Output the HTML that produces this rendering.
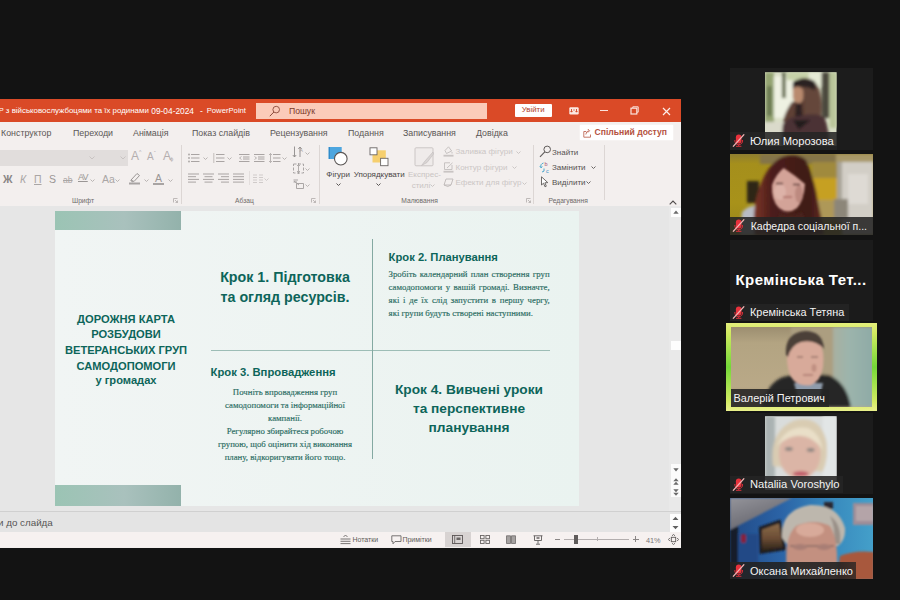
<!DOCTYPE html>
<html lang="uk">
<head>
<meta charset="utf-8">
<title>PowerPoint</title>
<style>
*{box-sizing:border-box;margin:0;padding:0}
html,body{width:900px;height:600px;overflow:hidden;background:#131313;font-family:"Liberation Sans",sans-serif}
.abs{position:absolute}
#ppt{position:absolute;left:0;top:99px;width:681px;height:448.5px;background:#f3efee;overflow:hidden}
#title{position:absolute;left:0;top:0;width:681px;height:23.3px;background:#da4a27;color:#fff;font-size:8.6px}
#title .t{position:absolute;top:6.6px;white-space:nowrap}
#search{position:absolute;left:256px;top:4px;width:231px;height:16px;background:#fbcbb9;color:#7a3a2a;font-size:8.6px}
#search span{position:absolute;left:33px;top:3px}
#login{position:absolute;left:514.7px;top:5px;width:37px;height:12.5px;background:#fff;color:#b03a1e;font-size:7.8px;text-align:center;line-height:12.5px;border-radius:1px}
#tabs{position:absolute;left:0;top:23px;width:681px;height:21px;font-size:8.85px;color:#5b5756}
#tabs span{position:absolute;top:5.7px;white-space:nowrap}
#share{position:absolute;left:580px;top:26px;width:92.5px;height:15px;background:#fff;color:#b4513e;font-weight:bold;font-size:8.6px;line-height:15px;white-space:nowrap;box-shadow:0 0 1.5px #fff}
#ribbon{position:absolute;left:0;top:44px;width:681px;height:63px;font-size:8px;color:#444}
.vsep{position:absolute;top:2px;width:1px;height:59px;background:#dcd6d4}
.glabel{position:absolute;top:53.5px;font-size:6.7px;color:#6e6a69;white-space:nowrap}
.rt{position:absolute;white-space:nowrap}
#work{position:absolute;left:0;top:107px;width:669px;height:305px;background:#e6e6e6}
#vscroll{position:absolute;left:669px;top:107px;width:12px;height:305px;background:#e9e9e9}
#slide{position:absolute;left:55px;top:112px;width:524px;height:295px;background:linear-gradient(90deg,#f1f5f4,#eaf3f0);overflow:hidden;color:#0f6b5f}
.deco{position:absolute;left:0;width:126px;height:19px;background:linear-gradient(90deg,#9bc4b4,#a9c1bd 55%,#93b2ab)}
.h{position:absolute;font-weight:bold;text-align:center;white-space:nowrap;color:#0d655a}
.b{position:absolute;font-family:"Liberation Serif",serif;font-size:8.78px;color:#2a6c62;white-space:nowrap;-webkit-text-stroke:0.15px #2a6c62}
.j{text-align:justify;text-align-last:justify;white-space:normal}
#notes{position:absolute;left:0;top:412px;width:681px;height:21px;background:#e4e4e4;border-top:1px solid #d0d0d0;font-size:9.8px;color:#555}
#status{position:absolute;left:0;top:433px;width:681px;height:15px;background:#f6f1f0;font-size:7px;color:#5f5b5a}
.tile{position:absolute;left:729.5px;width:143.5px;height:82px;background:#1c1c1c;overflow:hidden}
.nm{position:absolute;left:0;bottom:0;height:18px;background:rgba(36,36,36,.88);color:#f4f4f4;font-size:11px;line-height:18px;padding-left:20.5px;white-space:nowrap;overflow:hidden}
.mic{position:absolute;left:2.5px;top:1.9px;width:13px;height:13px}
</style>
</head>
<body>
<div id="ppt">
  <div id="title">
    <span class="t" style="right:532.2px;font-size:7.9px" id="t1">P з військовослужбоцями та їх родинами</span>
    <span class="t" style="left:151.3px;font-size:8.35px" id="t2">09-04-2024</span>
    <span class="t" style="left:200px" id="t3">-</span>
    <span class="t" style="left:206.7px;font-size:7.7px" id="t4">PowerPoint</span>
    <div id="search"><svg class="abs" style="left:13px;top:2px" width="12" height="12" viewBox="0 0 12 12"><circle cx="7.2" cy="4.6" r="3.3" fill="none" stroke="#8a4a3a" stroke-width="0.9"/><path d="M4.9 7 L0.8 11.2" stroke="#8a4a3a" stroke-width="1"/></svg><span>Пошук</span></div>
    <div id="login">Увійти</div>
    <svg class="abs" style="left:568.5px;top:7.5px" width="10" height="8" viewBox="0 0 10 8"><rect x="0.3" y="0.3" width="9.4" height="7.2" rx="1.2" fill="#fbe9e3"/><path d="M2.5 2 V5 M1.5 4 L2.5 5.2 L3.5 4 M7.5 2 V5 M6.5 4 L7.5 5.2 L8.5 4 M4.3 3 H5.7" fill="none" stroke="#d24625" stroke-width="0.9"/></svg>
    <div class="abs" style="left:600px;top:10.8px;width:7.5px;height:1px;background:#fbe3dc"></div>
    <svg class="abs" style="left:630px;top:7.3px" width="9" height="9" viewBox="0 0 9 9"><rect x="1" y="2.2" width="5.8" height="5.8" fill="none" stroke="#fbe3dc" stroke-width="1.2"/><path d="M2.8 2 V0.8 H8.2 V6.2 H7" fill="none" stroke="#fbe3dc" stroke-width="1"/></svg>
    <svg class="abs" style="left:661.5px;top:7.5px" width="9" height="9" viewBox="0 0 9 9"><path d="M1 1 L8 8 M8 1 L1 8" stroke="#fdeee9" stroke-width="1.2"/></svg>
  </div>
  <div id="tabs">
    <span style="left:1px">Конструктор</span>
    <span style="left:73px">Переходи</span>
    <span style="left:133px">Анімація</span>
    <span style="left:192px">Показ слайдів</span>
    <span style="left:270px">Рецензування</span>
    <span style="left:348px">Подання</span>
    <span style="left:403px">Записування</span>
    <span style="left:476px">Довідка</span>
  </div>
  <div id="share"><svg class="abs" style="left:3.3px;top:2.5px" width="9" height="10" viewBox="0 0 9 10"><path d="M3 3.5 H0.8 V9.2 H7.5 V6.5 M2.8 6.5 Q3.2 2.8 6 2.8 M4.8 1 L6.6 2.8 L4.8 4.6" fill="none" stroke="#c06a58" stroke-width="0.9"/></svg><span style="position:absolute;left:14.5px;top:0">Спільний доступ</span></div>
  <div id="ribbon">
    <!-- Font group -->
    <div class="abs" style="left:0;top:7px;width:128px;height:16px;background:#e1dddc"></div>
    <svg class="abs" style="left:89px;top:13px" width="6" height="4" viewBox="0 0 6 4"><path d="M0.5 0.5 L3 3 L5.5 0.5" fill="none" stroke="#c8c3c2" stroke-width="1"/></svg>
    <svg class="abs" style="left:120px;top:13px" width="6" height="4" viewBox="0 0 6 4"><path d="M0.5 0.5 L3 3 L5.5 0.5" fill="none" stroke="#c8c3c2" stroke-width="1"/></svg>
    <span class="rt" style="left:131px;top:6px;font-size:12px;color:#b3aeae">A</span><span class="rt" style="left:139px;top:6px;font-size:5px;color:#b3aeae">^</span>
    <span class="rt" style="left:147px;top:8px;font-size:10px;color:#b3aeae">A</span><span class="rt" style="left:154px;top:7px;font-size:5px;color:#b3aeae">ˇ</span>
    <span class="rt" style="left:163px;top:6px;font-size:12px;color:#b3aeae">A</span><span class="rt" style="left:170px;top:13px;font-size:6px;color:#b3aeae">ɸ</span>
    <span class="rt" style="left:3px;top:30px;font-size:10.5px;font-weight:bold;color:#8a8685">Ж</span>
    <span class="rt" style="left:20px;top:30px;font-size:10.5px;font-style:italic;color:#aaa6a5">К</span>
    <span class="rt" style="left:34px;top:30px;font-size:10.5px;text-decoration:underline;color:#aaa6a5">П</span>
    <span class="rt" style="left:49px;top:30px;font-size:10.5px;color:#9a9695">S</span>
    <span class="rt" style="left:63px;top:32px;font-size:8.5px;text-decoration:line-through;color:#aaa6a5">ab</span>
    <span class="rt" style="left:78px;top:29px;font-size:9px;text-decoration:underline;color:#9a9695;letter-spacing:-0.8px">AV</span>
    <svg class="abs" style="left:90px;top:36px" width="5" height="3" viewBox="0 0 5 3"><path d="M0.5 0.5 L2.5 2.5 L4.5 0.5" fill="none" stroke="#b9b4b3" stroke-width="1"/></svg>
    <span class="rt" style="left:102px;top:30px;font-size:10.5px;color:#aaa6a5">Aa</span>
    <svg class="abs" style="left:115px;top:36px" width="5" height="3" viewBox="0 0 5 3"><path d="M0.5 0.5 L2.5 2.5 L4.5 0.5" fill="none" stroke="#b9b4b3" stroke-width="1"/></svg>
    <svg class="abs" style="left:128px;top:28px" width="14" height="14" viewBox="0 0 14 14"><path d="M3 9 L9 2.5 L11.5 4.5 L6 10.5 Z M2.5 9.5 L5 11" fill="none" stroke="#9a9695" stroke-width="1"/><rect x="1" y="11.5" width="11" height="2" fill="#a8a4a3"/></svg>
    <svg class="abs" style="left:144px;top:36px" width="5" height="3" viewBox="0 0 5 3"><path d="M0.5 0.5 L2.5 2.5 L4.5 0.5" fill="none" stroke="#b9b4b3" stroke-width="1"/></svg>
    <span class="rt" style="left:155px;top:29px;font-size:10.5px;color:#9a9695">A</span>
    <div class="abs" style="left:153px;top:40px;width:11px;height:2px;background:#a8a4a3"></div>
    <svg class="abs" style="left:168px;top:36px" width="5" height="3" viewBox="0 0 5 3"><path d="M0.5 0.5 L2.5 2.5 L4.5 0.5" fill="none" stroke="#b9b4b3" stroke-width="1"/></svg>
    <span class="glabel" style="left:72px">Шрифт</span>
    <svg class="abs" style="left:173px;top:55px" width="5" height="5" viewBox="0 0 5 5"><path d="M0.5 4.5 V0.5 H4.5 M2 2 L4.5 4.5 M4.5 2.5 V4.5 H2.5" fill="none" stroke="#b0abaa" stroke-width="0.8"/></svg>
    <div class="vsep" style="left:181px"></div>

    <!-- Paragraph group -->
<svg class="abs" style="left:187.5px;top:9.5px" width="12" height="10" viewBox="0 0 12 10"><line x1="3" y1="1.5" x2="11.5" y2="1.5" stroke="#a9a4a3" stroke-width="1"/><line x1="3" y1="5" x2="11.5" y2="5" stroke="#a9a4a3" stroke-width="1"/><line x1="3" y1="8.5" x2="11.5" y2="8.5" stroke="#a9a4a3" stroke-width="1"/><circle cx="1" cy="1.5" r="0.9" fill="#a9a4a3"/><circle cx="1" cy="5" r="0.9" fill="#a9a4a3"/><circle cx="1" cy="8.5" r="0.9" fill="#a9a4a3"/></svg>
<svg class="abs" style="left:202.5px;top:14.0px" width="5" height="3" viewBox="0 0 5 3"><path d="M0.5 0.5 L2.5 2.5 L4.5 0.5" fill="none" stroke="#b9b4b3" stroke-width="1"/></svg>
<svg class="abs" style="left:213px;top:9.5px" width="12" height="10" viewBox="0 0 12 10"><line x1="3" y1="1.5" x2="11.5" y2="1.5" stroke="#a9a4a3" stroke-width="1"/><line x1="3" y1="5" x2="11.5" y2="5" stroke="#a9a4a3" stroke-width="1"/><line x1="3" y1="8.5" x2="11.5" y2="8.5" stroke="#a9a4a3" stroke-width="1"/><line x1="0.8" y1="0" x2="0.8" y2="10" stroke="#b5b0af" stroke-width="0.8"/></svg>
<svg class="abs" style="left:227.2px;top:14.0px" width="5" height="3" viewBox="0 0 5 3"><path d="M0.5 0.5 L2.5 2.5 L4.5 0.5" fill="none" stroke="#b9b4b3" stroke-width="1"/></svg>
<svg class="abs" style="left:239px;top:9.5px" width="11" height="10" viewBox="0 0 11 10"><line x1="0" y1="1.5" x2="10.5" y2="1.5" stroke="#a9a4a3" stroke-width="1"/><line x1="4" y1="4" x2="10.5" y2="4" stroke="#a9a4a3" stroke-width="1"/><line x1="4" y1="6" x2="10.5" y2="6" stroke="#a9a4a3" stroke-width="1"/><line x1="0" y1="8.5" x2="10.5" y2="8.5" stroke="#a9a4a3" stroke-width="1"/><path d="M2.5 3.5 L0.5 5 L2.5 6.5" fill="none" stroke="#a9a4a3" stroke-width="0.8"/></svg>
<svg class="abs" style="left:254px;top:9.5px" width="11" height="10" viewBox="0 0 11 10"><line x1="0" y1="1.5" x2="10.5" y2="1.5" stroke="#a9a4a3" stroke-width="1"/><line x1="4" y1="4" x2="10.5" y2="4" stroke="#a9a4a3" stroke-width="1"/><line x1="4" y1="6" x2="10.5" y2="6" stroke="#a9a4a3" stroke-width="1"/><line x1="0" y1="8.5" x2="10.5" y2="8.5" stroke="#a9a4a3" stroke-width="1"/><path d="M0.5 3.5 L2.5 5 L0.5 6.5" fill="none" stroke="#a9a4a3" stroke-width="0.8"/></svg>
<svg class="abs" style="left:269px;top:9.5px" width="12" height="10" viewBox="0 0 12 10"><line x1="4" y1="1.5" x2="11.5" y2="1.5" stroke="#a9a4a3" stroke-width="1"/><line x1="4" y1="5" x2="11.5" y2="5" stroke="#a9a4a3" stroke-width="1"/><line x1="4" y1="8.5" x2="11.5" y2="8.5" stroke="#a9a4a3" stroke-width="1"/><path d="M1.5 0.5 V9.5 M0 2 L1.5 0.5 L3 2 M0 8 L1.5 9.5 L3 8" fill="none" stroke="#a9a4a3" stroke-width="0.8"/></svg>
<svg class="abs" style="left:281.5px;top:14.0px" width="5" height="3" viewBox="0 0 5 3"><path d="M0.5 0.5 L2.5 2.5 L4.5 0.5" fill="none" stroke="#b9b4b3" stroke-width="1"/></svg>
<svg class="abs" style="left:187.5px;top:30px" width="12" height="10" viewBox="0 0 12 10"><line x1="0" y1="1" x2="11" y2="1" stroke="#a9a4a3" stroke-width="1"/><line x1="0" y1="3.7" x2="8" y2="3.7" stroke="#a9a4a3" stroke-width="1"/><line x1="0" y1="6.4" x2="11" y2="6.4" stroke="#a9a4a3" stroke-width="1"/><line x1="0" y1="9.1" x2="8" y2="9.1" stroke="#a9a4a3" stroke-width="1"/></svg>
<svg class="abs" style="left:203px;top:30px" width="12" height="10" viewBox="0 0 12 10"><line x1="0" y1="1" x2="11" y2="1" stroke="#a9a4a3" stroke-width="1"/><line x1="1.5" y1="3.7" x2="9.5" y2="3.7" stroke="#a9a4a3" stroke-width="1"/><line x1="0" y1="6.4" x2="11" y2="6.4" stroke="#a9a4a3" stroke-width="1"/><line x1="1.5" y1="9.1" x2="9.5" y2="9.1" stroke="#a9a4a3" stroke-width="1"/></svg>
<svg class="abs" style="left:218px;top:30px" width="12" height="10" viewBox="0 0 12 10"><line x1="0" y1="1" x2="11" y2="1" stroke="#a9a4a3" stroke-width="1"/><line x1="3" y1="3.7" x2="11" y2="3.7" stroke="#a9a4a3" stroke-width="1"/><line x1="0" y1="6.4" x2="11" y2="6.4" stroke="#a9a4a3" stroke-width="1"/><line x1="3" y1="9.1" x2="11" y2="9.1" stroke="#a9a4a3" stroke-width="1"/></svg>
<svg class="abs" style="left:233px;top:30px" width="12" height="10" viewBox="0 0 12 10"><line x1="0" y1="1" x2="11" y2="1" stroke="#a9a4a3" stroke-width="1"/><line x1="0" y1="3.7" x2="11" y2="3.7" stroke="#a9a4a3" stroke-width="1"/><line x1="0" y1="6.4" x2="11" y2="6.4" stroke="#a9a4a3" stroke-width="1"/><line x1="0" y1="9.1" x2="11" y2="9.1" stroke="#a9a4a3" stroke-width="1"/></svg>
<div class="abs" style="left:248.5px;top:28px;width:1px;height:14px;background:#e3dedd"></div>
<svg class="abs" style="left:253px;top:30.5px" width="10" height="10" viewBox="0 0 10 10"><line x1="0" y1="1" x2="4" y2="1" stroke="#d0cbca" stroke-width="1"/><line x1="0" y1="3.5" x2="4" y2="3.5" stroke="#d0cbca" stroke-width="1"/><line x1="0" y1="6" x2="4" y2="6" stroke="#d0cbca" stroke-width="1"/><line x1="0" y1="8.5" x2="4" y2="8.5" stroke="#d0cbca" stroke-width="1"/><line x1="6" y1="1" x2="10" y2="1" stroke="#d0cbca" stroke-width="1"/><line x1="6" y1="3.5" x2="10" y2="3.5" stroke="#d0cbca" stroke-width="1"/><line x1="6" y1="6" x2="10" y2="6" stroke="#d0cbca" stroke-width="1"/><line x1="6" y1="8.5" x2="10" y2="8.5" stroke="#d0cbca" stroke-width="1"/></svg>
<svg class="abs" style="left:264.2px;top:35.0px" width="5" height="3" viewBox="0 0 5 3"><path d="M0.5 0.5 L2.5 2.5 L4.5 0.5" fill="none" stroke="#cfcaca" stroke-width="1"/></svg>
<svg class="abs" style="left:292px;top:3px" width="12" height="12" viewBox="0 0 12 12"><path d="M2.5 0.5 V11 M0.8 9 L2.5 11 L4.2 9 M8 11 V1 M6.3 3 L8 1 L9.7 3" fill="none" stroke="#8f8b8a" stroke-width="0.9"/><text x="7.6" y="6" font-size="5" fill="#a9a4a3" font-family="Liberation Sans, sans-serif">A</text></svg>
<svg class="abs" style="left:305.0px;top:8.5px" width="5" height="3" viewBox="0 0 5 3"><path d="M0.5 0.5 L2.5 2.5 L4.5 0.5" fill="none" stroke="#b9b4b3" stroke-width="1"/></svg>
<svg class="abs" style="left:292.5px;top:20px" width="11" height="11" viewBox="0 0 11 11"><rect x="0.5" y="1" width="10" height="9" fill="none" stroke="#a19d9c" stroke-width="0.9" stroke-dasharray="3 1.5"/><path d="M5.5 0 V11 M4 3 L5.5 1.5 L7 3 M4 8 L5.5 9.5 L7 8" fill="none" stroke="#a19d9c" stroke-width="0.8"/></svg>
<svg class="abs" style="left:305.0px;top:24.5px" width="5" height="3" viewBox="0 0 5 3"><path d="M0.5 0.5 L2.5 2.5 L4.5 0.5" fill="none" stroke="#b9b4b3" stroke-width="1"/></svg>
<svg class="abs" style="left:292.5px;top:36px" width="11" height="10" viewBox="0 0 11 10"><path d="M0.5 1 H5 M0.5 3 H4 M3.5 4.5 H10.5 V9.5 H3.5 Z M1 2 L6 6" fill="none" stroke="#a19d9c" stroke-width="0.9"/></svg>
<svg class="abs" style="left:305.0px;top:40.5px" width="5" height="3" viewBox="0 0 5 3"><path d="M0.5 0.5 L2.5 2.5 L4.5 0.5" fill="none" stroke="#b9b4b3" stroke-width="1"/></svg>
<span class="glabel" style="left:235px">Абзац</span>
<svg class="abs" style="left:311px;top:55px" width="5" height="5" viewBox="0 0 5 5"><path d="M0.5 4.5 V0.5 H4.5 M2 2 L4.5 4.5 M4.5 2.5 V4.5 H2.5" fill="none" stroke="#b0abaa" stroke-width="0.8"/></svg>
<div class="vsep" style="left:319px"></div>
    <!-- Drawing group -->
<svg class="abs" style="left:327px;top:3px" width="23" height="21" viewBox="0 0 23 21"><rect x="1.7" y="1" width="13" height="12" fill="#4da6df"/><rect x="1.7" y="1" width="1.3" height="12" fill="#2f8bcb"/><circle cx="13.8" cy="12.7" r="6.3" fill="#fff" stroke="#5a5655" stroke-width="1.1"/></svg>
<span class="rt" style="left:326.3px;top:27px;font-size:8px;color:#4a4645">Фігури</span>
<svg class="abs" style="left:335.7px;top:39.5px" width="5" height="3" viewBox="0 0 5 3"><path d="M0.5 0.5 L2.5 2.5 L4.5 0.5" fill="none" stroke="#5a5655" stroke-width="1"/></svg>
<svg class="abs" style="left:368px;top:3px" width="22" height="21" viewBox="0 0 22 21"><rect x="4.5" y="4.3" width="13.3" height="12.2" fill="#f6cf6e"/><rect x="2" y="1.8" width="7" height="7" fill="#fff" stroke="#6a6665" stroke-width="0.9"/><rect x="12.6" y="12.3" width="7.4" height="7.4" fill="#fff" stroke="#6a6665" stroke-width="0.9"/></svg>
<span class="rt" style="left:353.7px;top:27px;font-size:8px;color:#4a4645">Упорядкувати</span>
<svg class="abs" style="left:375.8px;top:39.5px" width="5" height="3" viewBox="0 0 5 3"><path d="M0.5 0.5 L2.5 2.5 L4.5 0.5" fill="none" stroke="#5a5655" stroke-width="1"/></svg>
<svg class="abs" style="left:414px;top:3.5px" width="21" height="20" viewBox="0 0 21 20"><rect x="1" y="0.8" width="18" height="18" rx="1" fill="#efebea" stroke="#cbc6c5" stroke-width="1"/><path d="M19 5 L11 14 L7.5 18.5 L13 15.5 L19.5 7 Z" fill="#d9d5d4" stroke="#c4bfbe" stroke-width="0.7"/></svg>
<span class="rt" style="left:408px;top:27px;font-size:8px;color:#c9c4c3">Експрес-</span>
<span class="rt" style="left:411.7px;top:37.5px;font-size:8px;color:#c9c4c3">стилі</span>
<svg class="abs" style="left:429.5px;top:41.0px" width="5" height="3" viewBox="0 0 5 3"><path d="M0.5 0.5 L2.5 2.5 L4.5 0.5" fill="none" stroke="#c9c4c3" stroke-width="1"/></svg>
<svg class="abs" style="left:443px;top:3px" width="11" height="11" viewBox="0 0 11 11"><path d="M5.5 0.8 L8.7 5 L3.5 7.5 L2 4.5 Z M9 6 V7.5" fill="none" stroke="#c2bdbc" stroke-width="0.9"/><rect x="0.5" y="8.8" width="10" height="1.8" fill="#c9c4c3"/></svg>
<span class="rt" style="left:455.5px;top:4px;font-size:8px;color:#cbc6c5">Заливка фігури</span>
<svg class="abs" style="left:516.0px;top:7.5px" width="5" height="3" viewBox="0 0 5 3"><path d="M0.5 0.5 L2.5 2.5 L4.5 0.5" fill="none" stroke="#cbc6c5" stroke-width="1"/></svg>
<svg class="abs" style="left:443px;top:18.5px" width="11" height="11" viewBox="0 0 11 11"><path d="M1.5 0.8 H7 M9 3 V7.5 H1.5 V0.8 M4 6 L9.5 0.8" fill="none" stroke="#c2bdbc" stroke-width="0.9"/><rect x="0.5" y="8.8" width="10" height="1.8" fill="#c9c4c3"/></svg>
<span class="rt" style="left:455.5px;top:19.5px;font-size:8px;color:#cbc6c5">Контур фігури</span>
<svg class="abs" style="left:512.0px;top:23.0px" width="5" height="3" viewBox="0 0 5 3"><path d="M0.5 0.5 L2.5 2.5 L4.5 0.5" fill="none" stroke="#cbc6c5" stroke-width="1"/></svg>
<svg class="abs" style="left:443px;top:34px" width="11" height="11" viewBox="0 0 11 11"><path d="M3 2 H10 L8 8 H1 Z M1 8 Q5 11 8 8" fill="none" stroke="#bdb8b7" stroke-width="0.9"/></svg>
<span class="rt" style="left:455.5px;top:35px;font-size:8px;color:#cbc6c5">Ефекти для фігур</span>
<svg class="abs" style="left:522.0px;top:38.5px" width="5" height="3" viewBox="0 0 5 3"><path d="M0.5 0.5 L2.5 2.5 L4.5 0.5" fill="none" stroke="#cbc6c5" stroke-width="1"/></svg>
<span class="glabel" style="left:401.3px">Малювання</span>
<svg class="abs" style="left:525.5px;top:55px" width="5" height="5" viewBox="0 0 5 5"><path d="M0.5 4.5 V0.5 H4.5 M2 2 L4.5 4.5 M4.5 2.5 V4.5 H2.5" fill="none" stroke="#b0abaa" stroke-width="0.8"/></svg>
<div class="vsep" style="left:532.5px"></div>
    <!-- Editing group -->
<svg class="abs" style="left:539px;top:1.5px" width="13" height="13" viewBox="0 0 13 13"><circle cx="8.2" cy="4.4" r="3.3" fill="none" stroke="#5f5b5a" stroke-width="1"/><path d="M5.8 6.8 L1 11.8" stroke="#5f5b5a" stroke-width="1.1"/></svg>
<span class="rt" style="left:552px;top:4.5px;font-size:8px;color:#555150">Знайти</span>
<svg class="abs" style="left:538.5px;top:17.5px" width="12" height="13" viewBox="0 0 12 13"><text x="5.5" y="5" font-size="5.5" fill="#a4506a" font-family="Liberation Sans, sans-serif">b</text><text x="7" y="11.5" font-size="5.5" fill="#3b8dc4" font-family="Liberation Sans, sans-serif">c</text><path d="M4.5 2 Q1 3 2 6.5 M0.8 5.2 L2 6.8 L3.4 5.6 M3 11 Q6 11 5 7.5" fill="none" stroke="#3aa0c8" stroke-width="0.9"/></svg>
<span class="rt" style="left:552px;top:19.5px;font-size:8px;color:#555150">Замінити</span>
<svg class="abs" style="left:590.9px;top:23.0px" width="5" height="3" viewBox="0 0 5 3"><path d="M0.5 0.5 L2.5 2.5 L4.5 0.5" fill="none" stroke="#6a6665" stroke-width="1"/></svg>
<svg class="abs" style="left:540px;top:33px" width="9" height="12" viewBox="0 0 9 12"><path d="M1.5 0.8 V9 L3.5 7.2 L5 10.8 L6.3 10.2 L4.9 6.8 L7.8 6.6 Z" fill="#fff" stroke="#5f5b5a" stroke-width="0.9" stroke-linejoin="round"/></svg>
<span class="rt" style="left:552px;top:34.5px;font-size:8px;color:#555150">Виділити</span>
<svg class="abs" style="left:585.5px;top:38.0px" width="5" height="3" viewBox="0 0 5 3"><path d="M0.5 0.5 L2.5 2.5 L4.5 0.5" fill="none" stroke="#6a6665" stroke-width="1"/></svg>
<span class="glabel" style="left:548.5px">Редагування</span>
<div class="vsep" style="left:603.5px;height:55px"></div>
<svg class="abs" style="left:668.5px;top:56.5px" width="8" height="5" viewBox="0 0 8 5"><path d="M0.7 4.3 L4 1 L7.3 4.3" fill="none" stroke="#4f4b4a" stroke-width="1.1"/></svg>
  <!--RIBBON_END--></div>
  <div id="work"></div>
  <div id="vscroll">
    <div class="abs" style="left:1.5px;top:1.5px;width:10px;height:9.5px;background:#fdfdfd"></div>
    <svg class="abs" style="left:3.5px;top:4px" width="6" height="4" viewBox="0 0 6 4"><path d="M0.3 3.7 L3 0.5 L5.7 3.7 Z" fill="#6a6a6a"/></svg>
    <div class="abs" style="left:1.5px;top:135px;width:10px;height:9px;background:#fdfdfd"></div>
    <div class="abs" style="left:1.5px;top:257.5px;width:10px;height:33.5px;background:#fbfbfb"></div>
    <svg class="abs" style="left:3.5px;top:261.5px" width="6" height="4" viewBox="0 0 6 4"><path d="M0.3 0.3 L3 3.5 L5.7 0.3 Z" fill="#6a6a6a"/></svg>
    <svg class="abs" style="left:3.5px;top:271.5px" width="6" height="7" viewBox="0 0 6 7"><path d="M0.3 3.2 L3 0.3 L5.7 3.2 Z M0.3 6.7 L3 3.8 L5.7 6.7 Z" fill="#6a6a6a"/></svg>
    <svg class="abs" style="left:3.5px;top:282.5px" width="6" height="7" viewBox="0 0 6 7"><path d="M0.3 0.3 L3 3.2 L5.7 0.3 Z M0.3 3.8 L3 6.7 L5.7 3.8 Z" fill="#6a6a6a"/></svg>
  </div>
  <div id="slide">
    <div class="deco" style="top:0"></div>
    <div class="deco" style="top:274px;height:21px"></div>
    <div class="h" style="left:0;width:142px;top:100.6px;font-size:11.15px;line-height:15.7px">ДОРОЖНЯ КАРТА<br>РОЗБУДОВИ<br>ВЕТЕРАНСЬКИХ ГРУП<br>САМОДОПОМОГИ<br><span style="position:relative;top:-1.4px">у громадах</span></div>
    <div class="h" style="left:140px;width:180px;top:57.4px;font-size:14.25px;line-height:19.6px">Крок 1. Підготовка<br>та огляд ресурсів.</div>
    <div class="h" style="left:333.6px;top:39.1px;font-size:11.23px;line-height:14px;text-align:left">Крок 2. Планування</div>
    <div class="b" style="left:333.6px;top:56.9px;width:161px;line-height:13.07px;white-space:normal">
      <div class="j">Зробіть календарний план створення груп</div>
      <div class="j">самодопомоги у вашій громаді. Визначте,</div>
      <div class="j">які і де їх слід запустити в першу чергу,</div>
      <div>які групи будуть створені наступними.</div>
    </div>
    <div class="abs" style="left:156px;top:139px;width:339px;height:1px;background:#9dbdb6"></div>
    <div class="abs" style="left:316.8px;top:28px;width:1px;height:220px;background:#84a9a2"></div>
    <div class="h" style="left:155.6px;top:154.1px;font-size:11.26px;line-height:14px;text-align:left">Крок 3. Впровадження</div>
    <div class="b" style="left:150px;top:174.5px;width:160px;line-height:13.08px;text-align:center">Почніть впровадження груп<br>самодопомоги та інформаційної<br>кампанії.<br>Регулярно збирайтеся робочою<br>групою, щоб оцінити хід виконання<br>плану, відкоригувати його тощо.</div>
    <div class="h" style="left:324px;width:180px;top:168.9px;font-size:13.7px;line-height:19px">Крок 4. Вивчені уроки<br>та перспективне<br>планування</div>
  </div>
  <div id="notes"><span style="position:absolute;left:-2px;top:5px">и до слайда</span><div class="abs" style="left:670px;top:1.5px;width:10.5px;height:19px;background:#fdfdfd"></div><svg class="abs" style="left:672px;top:4px" width="7" height="14" viewBox="0 0 7 14"><path d="M0.5 4 L3.5 0.8 L6.5 4 Z M0.5 10 L3.5 13.2 L6.5 10 Z" fill="#5f5f5f"/></svg></div>
  <div id="status">
    <svg class="abs" style="left:340px;top:2px" width="11" height="11" viewBox="0 0 11 11"><path d="M0.5 5 H10.5 M0.5 7.3 H10.5 M0.5 9.6 H10.5 M3.5 3 L5.5 1 L7.5 3" fill="none" stroke="#6a6665" stroke-width="0.9"/></svg>
    <span class="rt" style="left:352.4px;top:4px">Нотатки</span>
    <svg class="abs" style="left:390.5px;top:2.5px" width="11" height="10" viewBox="0 0 11 10"><path d="M0.8 0.8 H10 V6.5 H4 L2 8.8 V6.5 H0.8 Z" fill="none" stroke="#6a6665" stroke-width="0.9"/></svg>
    <span class="rt" style="left:402.4px;top:4px">Примітки</span>
    <div class="abs" style="left:445px;top:0;width:26px;height:15px;background:#d8d3d2"></div>
    <svg class="abs" style="left:452px;top:3px" width="11" height="9" viewBox="0 0 11 9"><rect x="0.5" y="0.5" width="10" height="8" fill="none" stroke="#5a5655" stroke-width="0.9"/><path d="M2.7 0.5 V8.5" stroke="#5a5655" stroke-width="0.8"/><rect x="4.5" y="2.5" width="4" height="2.5" fill="#6a6665"/></svg>
    <svg class="abs" style="left:480px;top:3px" width="10" height="9" viewBox="0 0 10 9"><rect x="0.5" y="0.5" width="3.6" height="3.2" fill="none" stroke="#6a6665" stroke-width="0.9"/><rect x="5.9" y="0.5" width="3.6" height="3.2" fill="none" stroke="#6a6665" stroke-width="0.9"/><rect x="0.5" y="5.3" width="3.6" height="3.2" fill="none" stroke="#6a6665" stroke-width="0.9"/><rect x="5.9" y="5.3" width="3.6" height="3.2" fill="none" stroke="#6a6665" stroke-width="0.9"/></svg>
    <svg class="abs" style="left:506px;top:2.5px" width="10" height="9" viewBox="0 0 10 9"><path d="M0.5 0.8 H4.5 V8.5 H0.5 Z M5.5 0.8 H9.5 V8.5 H5.5 Z" fill="#a5a1a0" stroke="#6f6b6a" stroke-width="0.8"/></svg>
    <svg class="abs" style="left:533px;top:2.5px" width="10" height="10" viewBox="0 0 10 10"><path d="M0.5 0.8 H9.5 M1.5 0.8 V5.5 H8.5 V0.8 M5 5.5 V8.8 M3 9.2 H7" fill="none" stroke="#5f5b5a" stroke-width="0.9"/><rect x="3.5" y="2" width="3" height="2" fill="#8a8685"/></svg>
    <div class="abs" style="left:554.5px;top:6.6px;width:5px;height:1px;background:#8a8685"></div>
    <div class="abs" style="left:563.5px;top:6.6px;width:65.5px;height:1px;background:#b3aeae"></div>
    <div class="abs" style="left:596.5px;top:5px;width:1px;height:4px;background:#b3aeae"></div>
    <div class="abs" style="left:574px;top:2.5px;width:3.6px;height:9px;background:#5f5b5a"></div>
    <div class="abs" style="left:633px;top:6.6px;width:5.5px;height:1px;background:#8a8685"></div>
    <div class="abs" style="left:635.3px;top:4px;width:1px;height:6px;background:#8a8685"></div>
    <span class="rt" style="left:646px;top:3.5px;font-size:7.3px;color:#7a7675">41%</span>
    <svg class="abs" style="left:667.5px;top:2px" width="11" height="11" viewBox="0 0 11 11"><rect x="3.3" y="3.3" width="4.4" height="4.4" fill="none" stroke="#5f5b5a" stroke-width="0.9"/><path d="M4 1.8 L5.5 0.5 L7 1.8 M4 9.2 L5.5 10.5 L7 9.2 M1.8 4 L0.5 5.5 L1.8 7 M9.2 4 L10.5 5.5 L9.2 7" fill="none" stroke="#5f5b5a" stroke-width="0.9"/></svg>
  </div>
</div>

<svg width="0" height="0" style="position:absolute"><defs><filter id="bl" x="-10%" y="-10%" width="120%" height="120%"><feGaussianBlur stdDeviation="1.6"/></filter><filter id="bl2" x="-10%" y="-10%" width="120%" height="120%"><feGaussianBlur stdDeviation="0.9"/></filter></defs></svg>
<!-- Tile 1 -->
<div class="tile" style="top:68px;height:82px">
  <svg class="abs" style="left:35.8px;top:4px" width="71.5" height="74" viewBox="0 0 72 74">
    <rect width="72" height="74" fill="#d9dec6"/>
    <g filter="url(#bl)">
      <rect x="0" y="0" width="9" height="56" fill="#94a472"/>
      <rect x="2" y="14" width="5" height="30" fill="#6c7a52"/>
      <rect x="9" y="4" width="19" height="42" fill="#eef1e2"/>
      <rect x="17" y="0" width="4" height="26" fill="#6a7256"/>
      <rect x="22" y="0" width="30" height="8" fill="#c6d2a8"/>
      <rect x="44" y="0" width="14" height="14" fill="#e6ebd6"/>
      <rect x="57" y="0" width="8" height="46" fill="#4c4a3c"/>
      <rect x="65" y="0" width="7" height="56" fill="#bac69a"/>
      <rect x="0" y="50" width="20" height="24" fill="#dadacb"/>
      <path d="M30 14 Q32 5 42 6 Q54 8 56 24 Q58 36 56 46 L36 46 Q40 30 36 20 Z" fill="#65463a"/>
      <path d="M27 30 Q20 40 18 50 L40 50 L40 28 Z" fill="#5e4036"/><path d="M31 31 L37 31 L38 46 L30 46 Z" fill="#2e2224"/>
      <path d="M28 10 Q38 3 50 9 Q52 14 50 18 Q40 12 28 17 Z" fill="#2b2024"/>
      <path d="M28 16 Q34 13 38 17 Q40 26 36 31 Q30 32 28 26 Z" fill="#b98a6e"/>
      <path d="M16 74 L18 52 Q24 44 36 44 Q52 40 60 46 Q65 56 64 74 Z" fill="#4b3134"/>
      <path d="M28 48 L34 58 L46 48 Z" fill="#241a1e"/>
    </g>
  </svg>
  <div class="nm" style="width:107.5px;font-size:11.17px"><svg class="mic" viewBox="0 0 13 13"><rect x="3.9" y="0.5" width="5.6" height="9" rx="2.8" fill="#e8323c"/><path d="M2.8 6 Q2.8 10.6 6.7 10.6 Q10.6 10.6 10.6 6 M6.7 10.6 V12 M4 12.3 H9.4" fill="none" stroke="#d8303a" stroke-width="1"/><path d="M12.2 0.4 L1 12.6" stroke="#f4b4b4" stroke-width="1.3"/></svg>Юлия Морозова</div>
</div>
<!-- Tile 2 -->
<div class="tile" style="top:154px;height:81px">
  <svg class="abs" style="left:0;top:0" width="144" height="81" viewBox="0 0 144 81">
    <defs>
      <linearGradient id="y2" x1="0" y1="0" x2="0" y2="1"><stop offset="0" stop-color="#8e7d30"/><stop offset="0.12" stop-color="#a58f1c"/><stop offset="0.6" stop-color="#a8921a"/><stop offset="1" stop-color="#98861c"/></linearGradient>
      <linearGradient id="h2" x1="0" y1="0" x2="1" y2="0"><stop offset="0" stop-color="#7e3626"/><stop offset="0.25" stop-color="#4c1e1a"/><stop offset="0.8" stop-color="#3e1a18"/><stop offset="1" stop-color="#6a2c22"/></linearGradient>
    </defs>
    <rect width="144" height="81" fill="url(#y2)"/>
    <g filter="url(#bl)">
      <rect x="30" y="0" width="80" height="10" fill="#84744a"/>
      <rect x="82" y="8" width="28" height="16" fill="#a08a3c"/>
      <rect x="82" y="24" width="26" height="22" fill="#c6a022"/>
      <rect x="82" y="46" width="26" height="20" fill="#ae9858"/>
      <rect x="106" y="0" width="38" height="9" fill="#a89868"/>
      <rect x="107" y="8" width="6" height="60" fill="#a8a498"/>
      <rect x="112" y="8" width="32" height="73" fill="#d2cec6"/>
      <rect x="118" y="20" width="20" height="30" fill="#dedad4"/>
      <rect x="104" y="45" width="14" height="20" fill="#8c8679"/>
      <rect x="17" y="27" width="12" height="22" fill="#2e2812"/>
      <path d="M10 81 L12 58 Q20 50 30 52 L30 81 Z" fill="#b8bcc4"/>
      <path d="M24 81 Q22 52 30 32 Q38 10 52 3 Q66 -2 76 6 Q86 30 88 48 Q92 64 94 81 Z" fill="url(#h2)"/>
    </g>
    <g filter="url(#bl2)">
      <path d="M53.7 14 Q46 20 42 31 Q41 46 49 54 Q58 61 67 54 Q74 46 75 30 Q66 22 53.7 14 Z" fill="#d3a398"/>
      <ellipse cx="50" cy="38" rx="6" ry="8" fill="#ddb2a8"/>
      <ellipse cx="69" cy="40" rx="4" ry="9" fill="#bd8a80"/>
      <path d="M46 29.5 H53 M63 30.5 H70" stroke="#5a3430" stroke-width="1.3"/>
      <path d="M53 43 H62" stroke="#a3625c" stroke-width="1.3"/>
      <path d="M44 81 L50 58 Q60 64 72 58 L82 81 Z" fill="#4a221e"/>
    </g>
  </svg>
  <div class="nm" style="width:143.5px;font-size:10.55px;padding-left:21.2px"><svg class="mic" viewBox="0 0 13 13"><rect x="3.9" y="0.5" width="5.6" height="9" rx="2.8" fill="#e8323c"/><path d="M2.8 6 Q2.8 10.6 6.7 10.6 Q10.6 10.6 10.6 6 M6.7 10.6 V12 M4 12.3 H9.4" fill="none" stroke="#d8303a" stroke-width="1"/><path d="M12.2 0.4 L1 12.6" stroke="#f4b4b4" stroke-width="1.3"/></svg>Кафедра соціальної п...</div>
</div>
<!-- Tile 3 -->
<div class="tile" style="top:240px;height:81.3px;background:#1b1b1b">
  <div class="abs" style="left:6px;top:30.8px;font-size:15px;font-weight:bold;color:#fff;white-space:nowrap;letter-spacing:0.45px">Кремінська Тет...</div>
  <div class="nm" style="width:119px;bottom:0;height:17.6px;font-size:10.9px;line-height:17.6px"><svg class="mic" viewBox="0 0 13 13"><rect x="3.9" y="0.5" width="5.6" height="9" rx="2.8" fill="#e8323c"/><path d="M2.8 6 Q2.8 10.6 6.7 10.6 Q10.6 10.6 10.6 6 M6.7 10.6 V12 M4 12.3 H9.4" fill="none" stroke="#d8303a" stroke-width="1"/><path d="M12.2 0.4 L1 12.6" stroke="#f4b4b4" stroke-width="1.3"/></svg>Кремінська Тетяна</div>
</div>
<!-- Tile 4 active -->
<div class="abs" style="left:726px;top:322.5px;width:150.7px;height:88px;background:linear-gradient(180deg,#e4ee7c 0%,#d0ea60 12%,#74d838 50%,#d0ea60 88%,#eaf08c 100%)"></div>
<div class="tile" style="left:730.5px;top:327px;width:141.7px;height:79.6px">
  <svg class="abs" style="left:0;top:0" width="142" height="80" viewBox="0 0 142 80">
    <defs>
      <linearGradient id="b4" x1="0" y1="0" x2="0" y2="1"><stop offset="0" stop-color="#9c8e70"/><stop offset="0.2" stop-color="#b3a482"/><stop offset="1" stop-color="#bcab8a"/></linearGradient>
      <linearGradient id="r4" x1="0" y1="0" x2="1" y2="0"><stop offset="0" stop-color="#a8b0a0"/><stop offset="0.4" stop-color="#9cb4ac"/><stop offset="1" stop-color="#8eaaa6"/></linearGradient>
    </defs>
    <rect width="142" height="80" fill="url(#b4)"/>
    <g filter="url(#bl)">
      <rect x="60" y="0" width="44" height="60" fill="#ac9e80"/>
      <rect x="102" y="0" width="40" height="80" fill="url(#r4)"/>
      <rect x="0" y="62" width="40" height="18" fill="#b09e7c"/>
      <path d="M30 80 Q36 56 52 50 L70 46 L98 48 Q116 56 120 80 Z" fill="#272725"/>
    </g>
    <g filter="url(#bl2)">
      <path d="M63 56 L68 74 L88 74 L92 56 Z" fill="#8e9bab"/>
      <path d="M56 30 Q54 14 64 12 Q76 8 88 14 Q94 24 92 40 Q90 54 80 58 Q66 60 60 50 Q56 42 56 30 Z" fill="#d8aa9a"/>
      <path d="M55 28 Q53 6 74 4 Q92 4 93 22 Q84 12 70 15 Q60 18 57 30 Z" fill="#4b4138"/>
      <path d="M66 30 H72 M80 30 H87" stroke="#7a5a52" stroke-width="1.2"/>
      <ellipse cx="83" cy="41" rx="2.5" ry="4" fill="#c09082"/>
      <path d="M72 48 H82" stroke="#a06a64" stroke-width="1.2"/>
    </g>
  </svg>
  <div class="nm" style="width:98px;padding-left:3px;height:17.6px;font-size:10.9px">Валерій Петрович</div>
</div>
<!-- Tile 5 -->
<div class="tile" style="top:413px;height:81px">
  <svg class="abs" style="left:35.7px;top:3.2px" width="71.5" height="74" viewBox="0 0 72 74">
    <rect width="72" height="74" fill="#d9dcdb"/>
    <g filter="url(#bl)">
      <rect x="0" y="0" width="10" height="74" fill="#aab2b2"/>
      <rect x="58" y="0" width="14" height="74" fill="#e2e6e6"/>
      <path d="M8 50 Q4 14 30 4 Q56 -2 62 26 Q64 44 58 56 Z" fill="#d9ccb2"/>
      <ellipse cx="35" cy="38" rx="21" ry="25" fill="#dbb5a6"/>
      <path d="M12 30 Q22 8 44 12 Q56 18 58 34 Q44 14 24 22 Q16 26 12 30 Z" fill="#e9dfc8"/>
      <ellipse cx="24" cy="33" rx="4" ry="2" fill="#8a8480"/>
      <ellipse cx="46" cy="34" rx="4" ry="2" fill="#8a8480"/>
      <ellipse cx="36" cy="58" rx="8" ry="2.5" fill="#c05868"/>
    </g>
  </svg>
  <div class="nm" style="width:113.5px;bottom:1.5px;height:16.5px;font-size:11.2px;line-height:16.5px"><svg class="mic" viewBox="0 0 13 13"><rect x="3.9" y="0.5" width="5.6" height="9" rx="2.8" fill="#e8323c"/><path d="M2.8 6 Q2.8 10.6 6.7 10.6 Q10.6 10.6 10.6 6 M6.7 10.6 V12 M4 12.3 H9.4" fill="none" stroke="#d8303a" stroke-width="1"/><path d="M12.2 0.4 L1 12.6" stroke="#f4b4b4" stroke-width="1.3"/></svg>Nataliia Voroshylo</div>
</div>
<!-- Tile 6 -->
<div class="tile" style="top:498px;height:81.3px">
  <svg class="abs" style="left:0;top:0" width="144" height="82" viewBox="0 0 144 82">
    <defs>
      <linearGradient id="w6" x1="0" y1="0" x2="1" y2="0"><stop offset="0" stop-color="#214a86"/><stop offset="0.35" stop-color="#2b63a6"/><stop offset="0.7" stop-color="#3889bd"/><stop offset="1" stop-color="#44a0ca"/></linearGradient>
      <linearGradient id="c6" x1="0" y1="0" x2="0.6" y2="1"><stop offset="0" stop-color="#94949a"/><stop offset="0.7" stop-color="#707078"/><stop offset="1" stop-color="#4a5268"/></linearGradient>
      <linearGradient id="p6" x1="0" y1="0" x2="0" y2="1"><stop offset="0" stop-color="#8c6c4a"/><stop offset="0.55" stop-color="#6a4c34"/><stop offset="1" stop-color="#2a2018"/></linearGradient>
    </defs>
    <rect width="144" height="82" fill="url(#w6)"/>
    <g filter="url(#bl2)">
      <path d="M0 0 H62 L0 32 Z" fill="url(#c6)"/>
      <path d="M0 32 L8 28 V82 H0 Z" fill="#161c2c"/>
      <rect x="8" y="36" width="20" height="46" fill="#234a86"/>
      <path d="M29 29 L50.5 21.5 L56 52 L29.5 56 Z" fill="#1a1a20"/>
      <path d="M32 31.5 L49 25.5 L53 49.5 L32 53 Z" fill="url(#p6)"/>
      <rect x="11" y="36" width="5" height="9" rx="2" fill="#86223a"/>
      <rect x="123" y="5" width="21" height="22" fill="#9d8d98"/>
      <rect x="126" y="8" width="18" height="15" fill="#b4a4a8"/>
      <rect x="94" y="4" width="9" height="7" fill="#2c2630"/>
      <path d="M106 82 L110 58 Q124 52 144 54 V82 Z" fill="#a8583e"/>
      <path d="M52 40 Q50 12 80 7 Q108 6 115 30 Q116 42 108 48 L60 50 Z" fill="#bdb7ad"/>
      <path d="M100 18 Q112 26 110 46 L104 46 Q106 30 100 18 Z" fill="#9a9088"/>
      <path d="M58 82 Q52 40 66 28 Q84 20 100 28 Q110 44 106 82 Z" fill="#c39080"/>
      <ellipse cx="80" cy="32" rx="14" ry="7" fill="#d8aa9a"/>
      <path d="M60 48 H104" stroke="#8a6e66" stroke-width="1.6"/>
      <ellipse cx="70" cy="49" rx="7" ry="3" fill="#a87e74"/>
      <ellipse cx="94" cy="49" rx="7" ry="3" fill="#a87e74"/>
    </g>
  </svg>
  <div class="nm" style="width:126px;height:17.5px;background:linear-gradient(90deg,rgba(34,34,34,.9) 85%,rgba(34,34,34,.75))"><svg class="mic" viewBox="0 0 13 13"><rect x="3.9" y="0.5" width="5.6" height="9" rx="2.8" fill="#e8323c"/><path d="M2.8 6 Q2.8 10.6 6.7 10.6 Q10.6 10.6 10.6 6 M6.7 10.6 V12 M4 12.3 H9.4" fill="none" stroke="#d8303a" stroke-width="1"/><path d="M12.2 0.4 L1 12.6" stroke="#f4b4b4" stroke-width="1.3"/></svg>Оксана Михайленко</div>
</div>
</body>
</html>
